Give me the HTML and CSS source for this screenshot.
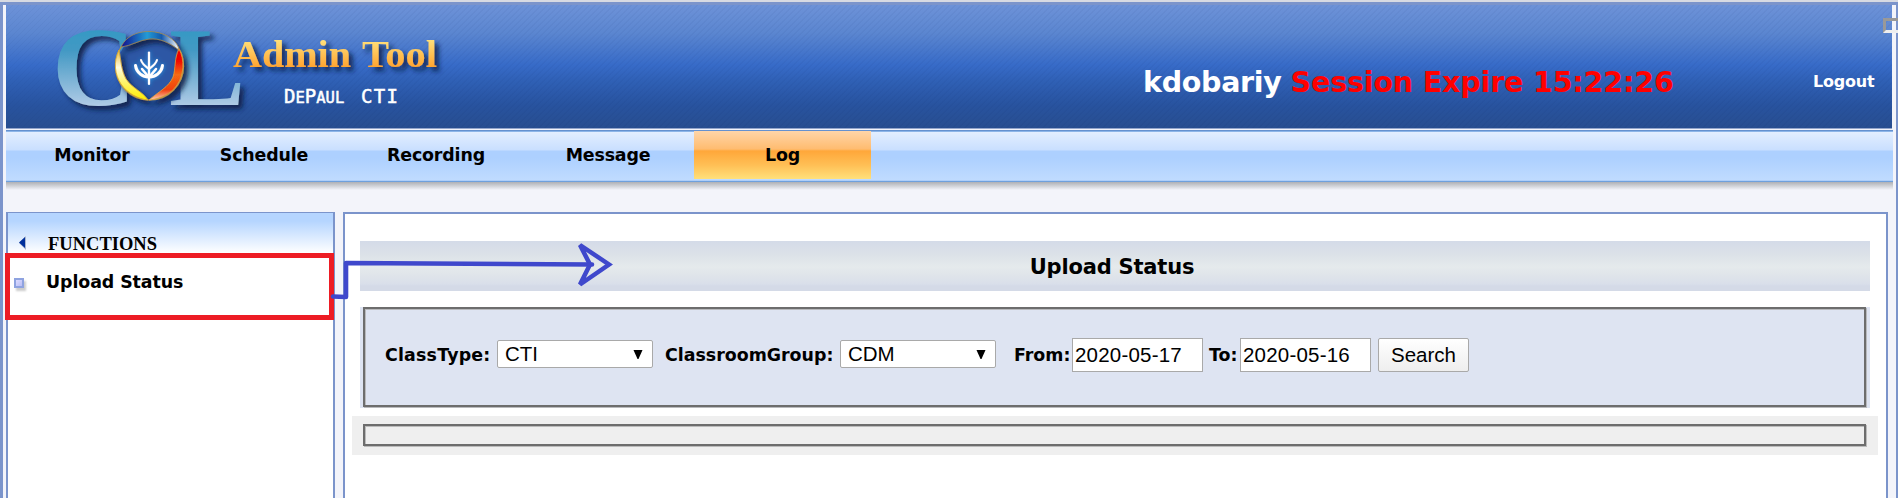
FILE: index.html
```html
<!DOCTYPE html>
<html lang="en">
<head>
<meta charset="utf-8">
<title>COL Admin Tool</title>
<link rel="stylesheet" href="styles.css">
</head>
<body>
<div class="frame">
  <header class="header">
    <svg class="logo" width="460" height="123" viewBox="6 5 460 123" role="img" aria-label="COL Admin Tool">
      <defs>
        <linearGradient id="teal" gradientUnits="userSpaceOnUse" x1="0" y1="27" x2="0" y2="106"><stop offset="0" stop-color="#3399c4"/><stop offset=".3" stop-color="#4399c4"/><stop offset="1" stop-color="#b0cbe6"/></linearGradient>
        <linearGradient id="gold" gradientUnits="userSpaceOnUse" x1="0" y1="40" x2="0" y2="68"><stop offset="0" stop-color="#ffe07a"/><stop offset="1" stop-color="#ffa22e"/></linearGradient>
        <linearGradient id="blue" x1="0" y1="0" x2="1" y2="0"><stop offset="0" stop-color="#120f8c"/><stop offset=".45" stop-color="#239bd5"/><stop offset=".7" stop-color="#1559ad"/><stop offset="1" stop-color="#fff"/></linearGradient>
        <linearGradient id="red" x1="0" y1="0" x2="0" y2="1"><stop offset="0" stop-color="#f00000"/><stop offset=".2" stop-color="#f00000"/><stop offset=".5" stop-color="#f66a12"/><stop offset=".8" stop-color="#f04010"/><stop offset="1" stop-color="#ffd0b0"/></linearGradient>
        <linearGradient id="yellow" x1="0" y1="0" x2="0" y2="1"><stop offset="0" stop-color="#e8b83a"/><stop offset=".35" stop-color="#fffce0"/><stop offset=".65" stop-color="#fff46a"/><stop offset="1" stop-color="#ffee00"/></linearGradient>
        <filter id="shadow" x="-10%" y="-20%" width="125%" height="150%"><feDropShadow dx="4" dy="4" stdDeviation="2.5" flood-color="#0b1c47" flood-opacity=".9"/></filter>
        <filter id="glow" x="-40%" y="-40%" width="180%" height="180%"><feDropShadow dx="0" dy="0" stdDeviation="2" flood-color="#22a5f0"/></filter>
      </defs>
      <g filter="url(#shadow)" fill="url(#teal)" class="monogram">
        <text x="52" y="105" textLength="84" lengthAdjust="spacingAndGlyphs">C</text>
        <text x="169" y="105" textLength="76" lengthAdjust="spacingAndGlyphs">L</text>
      </g>
      <circle cx="149.500" cy="66" r="32" fill="#2d57a5"/>
      <g filter="url(#shadow)">
        <circle cx="149.500" cy="66" r="34" fill="none" stroke="#b79545" stroke-width="1.200"/>
        <path d="M121 47 C127 34 142 30 155 32 C168 34 178 42 179 50 C168 42 160 38 149 39 C139 40 131 46 121 47Z" fill="url(#blue)" stroke="#a08a55" stroke-width=".8"/>
        <path d="M179 49 C185 60 184 75 177 85 C171 94 160 99 149 100 C158 92 169 87 173 77 C176 68 174 58 179 49Z" fill="url(#red)" stroke="#e1a23b" stroke-width=".8"/>
        <path d="M119 50 C113 62 115 75 121 84 C127 93 138 99 148 100 C143 92 132 88 126 79 C121 70 121 60 119 50Z" fill="url(#yellow)" stroke="#d8a935" stroke-width=".8"/>
      </g>
      <g filter="url(#glow)" fill="none" stroke="#fff" stroke-linecap="round">
        <path d="M149 52.500V84" stroke-width="2.200"/>
        <path d="M141 60C142 64 145 66 149 69C153 66 156 64 157 60" stroke-width="2"/>
        <path d="M135.500 65.500C136.500 73 143 77 149 77C155 77 161.500 73 162.500 65.500" stroke-width="3"/>
        <path d="M142 69L147.500 75.500M156 69L150.500 75.500" stroke-width="2.400"/>
      </g>
      <g filter="url(#shadow)" fill="url(#gold)" class="product">
        <text x="233" y="67" textLength="118" lengthAdjust="spacingAndGlyphs">Admin</text>
        <text x="362" y="67" textLength="75" lengthAdjust="spacingAndGlyphs">Tool</text>
      </g>
      <g fill="#fff" class="school">
        <text x="284" y="103">D<tspan class="small">E</tspan>P<tspan class="small">AUL</tspan></text>
        <text x="361" y="103" textLength="37">CTI</text>
      </g>
    </svg>
    <div class="session"><span class="user">kdobariy</span><span class="expire">Session Expire 15:22:26</span></div>
    <a class="logout">Logout</a>
    <span class="corner"></span>
  </header>
  <nav class="nav">
    <a class="tab">Monitor</a><a class="tab">Schedule</a><a class="tab">Recording</a><a class="tab">Message</a><a class="tab active">Log</a>
  </nav>
  <div class="nav-shadow"></div>
  <div class="content">
    <aside class="sidebar">
      <div class="side-head">
        <svg class="back" width="8" height="14" viewBox="0 0 8 14"><path d="M7 0V14L0 7Z" fill="#a9b5ce"/><path d="M6 1V12L0 6.500Z" fill="#00309c"/></svg>
        <span class="functions">FUNCTIONS</span>
      </div>
      <div class="side-item">
        <span class="bullet"></span><span class="side-link">Upload Status</span>
      </div>
    </aside>
    <main class="main">
      <h1 class="title">Upload Status</h1>
      <div class="filters">
        <form class="filter-form">
          <label class="label l-type">ClassType:</label>
          <span class="select">CTI<svg width="10" height="9" viewBox="0 0 10 9"><path d="M.5 0H9.500L5.500 9H4.500Z"/></svg></span>
          <label class="label l-group">ClassroomGroup:</label>
          <span class="select">CDM<svg width="10" height="9" viewBox="0 0 10 9"><path d="M.5 0H9.500L5.500 9H4.500Z"/></svg></span>
          <label class="label l-from">From:</label>
          <input class="date" type="text" value="2020-05-17">
          <label class="label l-to">To:</label>
          <input class="date" type="text" value="2020-05-16">
          <button class="search" type="button">Search</button>
        </form>
      </div>
      <div class="results"><div class="results-box"></div></div>
    </main>
  </div>
</div>
<div class="highlight"></div>
<svg class="arrow" width="290" height="70" viewBox="330 235 290 70" fill="none" stroke="#3f48cc">
  <path d="M333 296.500L346 297V263L592 264.500" stroke-width="4.600" stroke-linejoin="round" stroke-linecap="round"/>
  <path d="M580 245L609 264.500L580 284.500L590 264.500Z" stroke-width="4.500"/>
</svg>
</body>
</html>
```
FILE: styles.css
```css
* { box-sizing: border-box; }
html, body { height: 100%; }
body {
  margin: 0;
  overflow: hidden;
  position: relative;
  background: #f3f4fa;
  color: #000;
  font-family: "DejaVu Sans", Verdana, sans-serif;
}
.frame {
  height: 498px;
  border-top: 2px solid #d7dae2;
  box-shadow: inset 3px 3px #7b94cb, inset -2px 0 #7b94cb;
  padding: 3px 5px 0 6px;
  display: flex;
  flex-direction: column;
}
.header {
  position: relative;
  flex: none;
  height: 124px;
  width: 1886px;
  display: flex;
  border-bottom: 1px solid #93a5cb;
  background:
    repeating-linear-gradient(135deg, rgba(0,20,80,.04) 0 1.400px, transparent 1.400px 4.243px),
    linear-gradient(#6d92d8 0, #5b86d0 28px, #376bc8 60px, #2f60b5 76px, #28539f 100px, #284e90 123px);
}
.logo { flex: none; display: block; }
.monogram { font: bold 112px "Liberation Serif", serif; }
.product { font: bold 38px "Liberation Serif", serif; }
.school { font: 19px "DejaVu Sans Mono", monospace; stroke: #fff; stroke-width: .5px; }
.school .small { font-size: 15.500px; }
.session {
  margin-left: 677px;
  padding-top: 61px;
  width: 599px;
  display: flex;
  gap: 9px;
  font-size: 28.500px;
  line-height: 34px;
  font-weight: bold;
  white-space: nowrap;
}
.user { color: #fff; letter-spacing: -.3px; }
.expire { color: #f00; letter-spacing: -.15px; }
.logout {
  margin-left: 71px;
  padding-top: 67px;
  font-size: 16px;
  line-height: 20px;
  font-weight: bold;
  color: #fff;
  letter-spacing: -.2px;
}
.corner {
  position: absolute;
  left: 1877px;
  top: 13px;
  width: 20px;
  height: 15px;
  border: 3px solid #999;
  border-bottom-color: #eee;
}
.nav {
  flex: none;
  margin-top: 1px;
  height: 52px;
  display: flex;
  padding-bottom: 2px;
  border-top: 1px solid #6591cf;
  border-bottom: 1px solid #6fa0dc;
  background: linear-gradient(#8db5e8 0 1px, #e3eeff 1px, #c9dfff 19px, #add0ff 20px, #add0ff 27px, #c0dbff 49px, #9cc2f2 50px);
}
.tab {
  width: 172px;
  text-align: center;
  font-size: 17.400px;
  letter-spacing: -.15px;
  line-height: 49px;
  font-weight: bold;
}
.tab.active {
  width: 177px;
  background: linear-gradient(#ffd5a8 0, #ffbc70 18px, #ffa73a 20px, #ffbf55 34px, #ffe07a 48px);
}
.nav-shadow { flex: none; height: 8px; background: linear-gradient(#aeb0b5, #f3f4fa); }
.content { flex: 1; display: flex; gap: 8px; padding-top: 22px; }
.sidebar {
  width: 329px;
  border: 2px solid #7b94cb;
  border-top-width: 1px;
  border-bottom: 0;
  background: #fff;
}
.side-head {
  height: 40px;
  padding: 23px 0 0 11px;
  display: flex;
  background: linear-gradient(#b5d5ff 0 8px, #fff 40px);
}
.back { flex: none; margin-right: 21px; }
.functions { font: bold 18.500px/16px "Liberation Serif", serif; }
.side-item { height: 67px; display: flex; padding: 17px 0 0 6px; }
.bullet {
  width: 10px;
  height: 10px;
  margin: 8px 22px 0 0;
  border: 2px solid #8fa3e0;
  background: linear-gradient(135deg, #dcdcff, #b9bdf5);
  box-shadow: 2px 3px 2px #ccc;
}
.side-link { font-size: 17.400px; line-height: 24px; font-weight: bold; letter-spacing: -.08px; }
.main {
  width: 1545px;
  border: 2px solid #7b94cb;
  border-bottom: 0;
  background: #fff;
  padding: 27px 8px 0 7px;
}
.title {
  margin: 0 8px;
  height: 50px;
  padding-right: 6px;
  text-align: center;
  font-size: 21px;
  letter-spacing: -.2px;
  line-height: 53px;
  background: linear-gradient(#d4dbe8 0, #dce2e8 14px, #e5eaec 26px, #dfe4ea 35px, #d9dfea 43px, #d4dae7 45px);
}
.filters {
  margin: 16px 8px 8px;
  height: 101px;
  padding: 0 4px 0 3px;
  background: #dee4f2;
}
.filter-form {
  height: 100px;
  border: 2px solid #6d6d6d;
  box-shadow: inset 1px 1px #b9babd, 1px 1px #b9babd;
  padding: 29px 0 0 20px;
  display: flex;
}
.label { font-size: 17.400px; line-height: 35px; font-weight: bold; white-space: nowrap; }
.l-type { width: 112px; letter-spacing: .2px; }
.l-group { width: 175px; margin-left: 12px; }
.l-from { width: 58px; margin-left: 18px; }
.l-to { width: 31px; margin-left: 6px; }
.select, .date, .search {
  font-family: "Liberation Sans", Arial, sans-serif;
  font-size: 20.500px;
  color: #000;
  border: 1px solid #a9a9a9;
  background: #fff;
}
.select {
  width: 156px;
  height: 28px;
  margin-top: 2px;
  padding: 0 9px 0 7px;
  line-height: 28px;
  border-radius: 2px;
  display: flex;
  justify-content: space-between;
  align-items: center;
}
.date { width: 131px; height: 34px; padding: 0 2px 1px; outline: 0; letter-spacing: .2px; }
.search {
  width: 91px;
  height: 34px;
  margin-left: 7px;
  padding: 0 0 1px;
  border-radius: 2px;
  background: linear-gradient(#fff, #eee);
}
.results { height: 39px; padding: 8px 12px 0 11px; background: #efefef; }
.results-box {
  height: 22px;
  border: 2px solid #6d6d6d;
  box-shadow: inset 1px 1px #bbb, 1px 1px #bbb;
}
.highlight {
  position: absolute;
  left: 5px;
  top: 253px;
  width: 329px;
  height: 67px;
  border: 5px solid #ed1c24;
}
.arrow { position: absolute; left: 330px; top: 235px; }
```
